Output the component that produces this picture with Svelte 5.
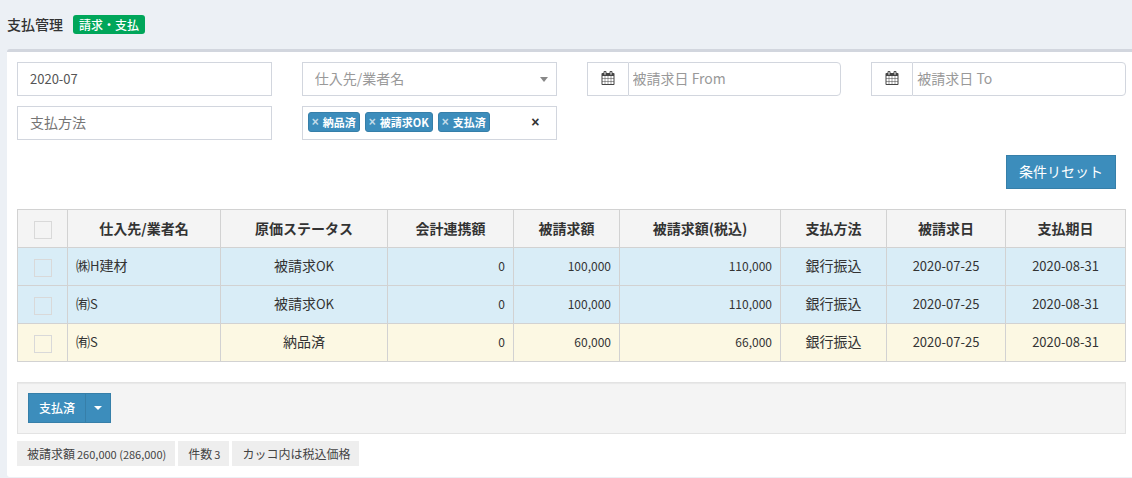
<script lang="ts">
	type Row = {
		supplier: string;
		status: string;
		linked: number;
		amount: number;
		taxed: number;
		method: string;
		billed: string;
		due: string;
		kind: 'info' | 'warning';
	};

	const columns = [
		{ label: '仕入先/業者名', width: 153 },
		{ label: '原価ステータス', width: 167 },
		{ label: '会計連携額', width: 126 },
		{ label: '被請求額', width: 106 },
		{ label: '被請求額(税込)', width: 161 },
		{ label: '支払方法', width: 106 },
		{ label: '被請求日', width: 119 },
		{ label: '支払期日', width: 120 }
	];
	const checkWidth = 50;
	const total = columns.reduce((sum, c) => sum + c.width, checkWidth);
	const percent = (width: number) => `${(width / total) * 100}%`;

	const rows: Row[] = [
		{ supplier: '㈱H建材', status: '被請求OK', linked: 0, amount: 100000, taxed: 110000, method: '銀行振込', billed: '2020-07-25', due: '2020-08-31', kind: 'info' },
		{ supplier: '㈲S', status: '被請求OK', linked: 0, amount: 100000, taxed: 110000, method: '銀行振込', billed: '2020-07-25', due: '2020-08-31', kind: 'info' },
		{ supplier: '㈲S', status: '納品済', linked: 0, amount: 60000, taxed: 66000, method: '銀行振込', billed: '2020-07-25', due: '2020-08-31', kind: 'warning' }
	];

	let month = $state('2020-07');
	let supplier = $state('');
	let from = $state('');
	let to = $state('');
	let method = $state('');
	let statuses = $state(['納品済', '被請求OK', '支払済']);
	let checked = $state(rows.map(() => false));

	const allChecked = $derived(checked.every(Boolean));
	const sum = $derived(rows.reduce((n, r) => n + r.amount, 0));
	const sumTaxed = $derived(rows.reduce((n, r) => n + r.taxed, 0));

	const money = (n: number) => n.toLocaleString('en-US');

	// split into latin and japanese runs, latin is set a little smaller
	const runs = (text: string) => text.match(/[A-Za-z0-9]+|[^A-Za-z0-9]+/g) ?? [];

	const toggleAll = () => {
		const next = !allChecked;
		checked = checked.map(() => next);
	};

	const removeStatus = (status: string) => {
		statuses = statuses.filter((s) => s !== status);
	};

	const reset = () => {
		month = supplier = from = to = method = '';
		statuses = [];
	};
</script>

{#snippet mixed(text: string)}
	{#each runs(text) as run}{#if /[A-Za-z0-9]/.test(run)}<span class="latin">{run}</span>{:else}{run}{/if}{/each}
{/snippet}

{#snippet calendar()}
	<svg width="14" height="14" viewBox="64 0 1664 1792" aria-hidden="true">
		<path
			d="M192 1664h288v-288h-288v288zm352 0h320v-288h-320v288zm-352-352h288v-320h-288v320zm352 0h320v-320h-320v320zm-352-384h288v-288h-288v288zm736 736h320v-288h-320v288zm-384-736h320v-288h-320v288zm768 736h288v-288h-288v288zm-384-352h320v-320h-320v320zm-352-864v-288q0-13-9.5-22.5t-22.5-9.5h-64q-13 0-22.5 9.5t-9.5 22.5v288q0 13 9.5 22.5t22.5 9.5h64q13 0 22.5-9.5t9.5-22.5zm736 864h288v-320h-288v320zm-384-384h320v-288h-320v288zm384 0h288v-288h-288v288zm32-480v-288q0-13-9.5-22.5t-22.5-9.5h-64q-13 0-22.5 9.5t-9.5 22.5v288q0 13 9.5 22.5t22.5 9.5h64q13 0 22.5-9.5t9.5-22.5zm384-64v1280q0 52-38 90t-90 38h-1408q-52 0-90-38t-38-90v-1280q0-52 38-90t90-38h128v-96q0-66 47-113t113-47h64q66 0 113 47t47 113v96h384v-96q0-66 47-113t113-47h64q66 0 113 47t47 113v96h128q52 0 90 38t38 90z"
		/>
	</svg>
{/snippet}

<div class="page">
	<header>
		<h1>支払管理</h1>
		<span class="badge">請求・支払</span>
	</header>

	<main class="box">
		<form class="filters" onsubmit={(e) => e.preventDefault()}>
			<input class="control month" aria-label="年月" bind:value={month} />
			<div class="select">
				<select class="control" aria-label="仕入先/業者名" bind:value={supplier}>
					<option value="">仕入先/業者名</option>
					<option>㈱H建材</option>
					<option>㈲S</option>
				</select>
				<svg class="arrow" width="8" height="5" viewBox="0 0 8 5" aria-hidden="true"><path d="M0 0h8L4 5z" /></svg>
			</div>
			<div class="group">
				<label class="addon" for="from">{@render calendar()}</label>
				<input class="control" id="from" aria-label="被請求日 From" placeholder="被請求日 From" bind:value={from} />
			</div>
			<div class="group">
				<label class="addon" for="to">{@render calendar()}</label>
				<input class="control" id="to" aria-label="被請求日 To" placeholder="被請求日 To" bind:value={to} />
			</div>
			<input class="control method" aria-label="支払方法" placeholder="支払方法" bind:value={method} />
			<div class="control tags">
				{#each statuses as status (status)}
					<span class="tag">
						<button type="button" aria-label="{status}を外す" onclick={() => removeStatus(status)}>×</button>
						<span>{status}</span>
					</span>
				{/each}
				<button type="button" class="clear" aria-label="クリア" onclick={() => (statuses = [])}>×</button>
			</div>
		</form>

		<div class="reset">
			<button type="button" class="btn" onclick={reset}>条件リセット</button>
		</div>

		<table>
			<colgroup>
				<col style:width={percent(checkWidth)} />
				{#each columns as column}
					<col style:width={percent(column.width)} />
				{/each}
			</colgroup>
			<thead>
				<tr>
					<th class="check"><input type="checkbox" aria-label="すべて選択" checked={allChecked} onchange={toggleAll} /></th>
					{#each columns as column}
						<th>{column.label}</th>
					{/each}
				</tr>
			</thead>
			<tbody>
				{#each rows as row, i}
					<tr class={row.kind}>
						<td class="check"><input type="checkbox" aria-label="{row.supplier}を選択" bind:checked={checked[i]} /></td>
						<td>{@render mixed(row.supplier)}</td>
						<td class="center">{@render mixed(row.status)}</td>
						<td class="number">{money(row.linked)}</td>
						<td class="number">{money(row.amount)}</td>
						<td class="number">{money(row.taxed)}</td>
						<td class="center">{row.method}</td>
						<td class="date">{row.billed}</td>
						<td class="date">{row.due}</td>
					</tr>
				{/each}
			</tbody>
		</table>

		<div class="actions">
			<button type="button" class="btn small">支払済</button>
			<button type="button" class="btn small caret" aria-label="その他の操作">
				<svg width="8" height="4" viewBox="0 0 8 4" aria-hidden="true"><path d="M0 0h8L4 4z" /></svg>
			</button>
		</div>

		<div class="summary">
			<span>被請求額<small>{money(sum)} ({money(sumTaxed)})</small></span>
			<span>件数<small>{rows.length}</small></span>
			<span>カッコ内は税込価格</span>
		</div>
	</main>
</div>

<style>
	:global(body) {
		margin: 0;
		background: #ecf0f5;
	}

	.page {
		padding-left: 7px;
		color: #333;
		font: 14px/20px 'Noto Sans CJK JP', sans-serif;
	}

	.page :is(input, select, button) {
		box-sizing: border-box;
		margin: 0;
		font-family: inherit;
	}

	button {
		cursor: pointer;
	}

	header {
		display: flex;
		align-items: center;
		gap: 10px;
		height: 49px;
	}

	h1 {
		margin: 0;
		padding-bottom: 2px;
		font-size: 14px;
		font-weight: 500;
	}

	.badge {
		padding: 0 6px;
		border-radius: 3px;
		background: #00a65a;
		color: #fff;
		font-size: 12px;
		font-weight: 500;
		line-height: 19px;
	}

	.box {
		padding: 10px 6px 11px 10px;
		border-top: 3px solid #d2d6de;
		border-radius: 3px 0 0 3px;
		background: #fff;
	}

	.filters {
		display: grid;
		grid-template-columns: repeat(4, minmax(0, 1fr));
		gap: 10px 30px;
	}

	.control {
		box-sizing: border-box;
		width: 100%;
		height: 34px;
		padding: 0 12px 2px;
		border: 1px solid #d2d6de;
		border-radius: 0;
		background: #fff;
		color: #555;
		font-size: 14px;
	}

	.control.month {
		font-size: 13px;
	}

	.control::placeholder {
		color: #999;
		opacity: 1;
	}

	.control.method::placeholder {
		color: #757575;
	}

	.select {
		display: grid;
		align-items: center;
	}

	.select > * {
		grid-area: 1 / 1;
	}

	select.control {
		appearance: none;
		color: #999;
	}

	.arrow {
		justify-self: end;
		margin-right: 9px;
		fill: #888;
		pointer-events: none;
	}

	.group {
		display: flex;
	}

	.addon {
		display: flex;
		flex: none;
		align-items: center;
		justify-content: center;
		box-sizing: border-box;
		width: 41px;
		padding-bottom: 2px;
		border: 1px solid #d2d6de;
		border-right: 0;
		fill: #444;
	}

	.group .control {
		flex: 1;
		min-width: 0;
		padding: 0 4px 2px;
		border-radius: 0 4px 4px 0;
	}

	.tags {
		display: flex;
		align-items: flex-start;
		gap: 5px;
		padding: 5px;
	}

	.tag {
		display: flex;
		gap: 4px;
		padding: 0 3px;
		border: 1px solid #367fa9;
		border-radius: 3px;
		background: #3c8dbc;
		color: #fff;
		font-size: 11px;
		font-weight: 700;
		line-height: 18px;
		white-space: nowrap;
	}

	.page .tag button,
	.page .clear {
		padding: 0;
		border: 0;
		background: none;
		color: #ffffffb3;
		font-family: 'Liberation Sans', sans-serif;
		font-size: 12px;
		font-weight: 700;
		line-height: 20px;
	}

	.page .clear {
		margin: 0 11px 0 auto;
		color: #333;
		font-size: 14px;
	}

	.reset {
		display: flex;
		justify-content: flex-end;
		padding: 15px 10px 20px;
	}

	.btn {
		height: 34px;
		padding: 0 12px 2px;
		border: 1px solid #367fa9;
		background: #3c8dbc;
		color: #fff;
		font-size: 14px;
	}

	.page .tag button {
		height: 18px;
		line-height: 18px;
	}

	table {
		width: 100%;
		border-collapse: collapse;
		table-layout: fixed;
	}

	th,
	td {
		box-sizing: border-box;
		height: 38px;
		padding: 0 8px 2px;
		border: 1px solid #d2d2d2;
		white-space: nowrap;
	}

	td {
		padding-bottom: 3px;
	}

	th {
		background: #f4f4f4;
		font-weight: 700;
	}

	.info {
		background: #d9edf7;
	}

	.warning {
		background: #fcf8e3;
	}

	.center,
	.date {
		text-align: center;
	}

	.date {
		padding-bottom: 2px;
		font-size: 13px;
	}

	.number {
		padding-bottom: 2px;
		font-size: 12px;
		text-align: right;
	}

	.latin {
		font-size: 13px;
		line-height: 1;
	}

	.check {
		padding: 3px 0 0;
		text-align: center;
	}

	.check input {
		display: block;
		width: 18px;
		height: 18px;
		margin: 0 auto;
		border: 1px solid #d9d9d9;
		appearance: none;
	}

	.check input:checked {
		background: #3c8dbc;
	}

	.actions {
		display: flex;
		margin-top: 20px;
		padding: 10px;
		border: 1px solid #e3e3e3;
		background: #f4f4f4;
		box-shadow: inset 0 1px 1px #0000000d;
	}

	.btn.small {
		height: 30px;
		padding: 0 10px 2px;
		font-size: 12px;
		font-weight: 500;
	}

	.btn.caret {
		display: flex;
		align-items: center;
		padding: 0 8px;
		margin-left: -1px;
		fill: #fff;
	}

	.summary {
		display: flex;
		flex-wrap: wrap;
		gap: 3px;
		margin-top: 7px;
		color: #444;
		font-size: 12px;
		line-height: 25px;
	}

	.summary span {
		padding: 0 9px 0 10px;
		background: #eee;
	}

	.summary small {
		margin-left: 2px;
		font-size: 11px;
		line-height: 1;
	}
</style>
